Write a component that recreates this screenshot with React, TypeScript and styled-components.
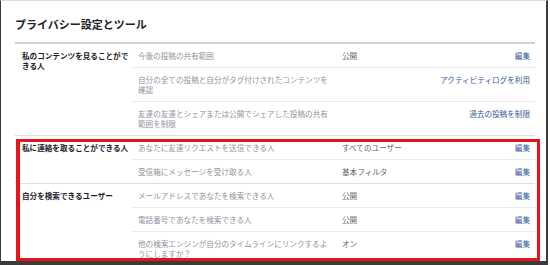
import { FC } from 'react';
import styled, { createGlobalStyle } from 'styled-components';

const GlobalStyle = createGlobalStyle`
	html, body {
		margin: 0;
		padding: 0;
		background: #ffffff;
	}
	body {
		font-family: 'Noto Sans CJK JP', 'Noto Sans', sans-serif;
	}
`;

type Row = { label: string; value?: string; action: string };
type Section = { title: string; rows: Row[] };

const sections: Section[] = [
	{
		title: '私のコンテンツを見ることができる人',
		rows: [
			{ label: '今後の投稿の共有範囲', value: '公開', action: '編集' },
			{ label: '自分の全ての投稿と自分がタグ付けされたコンテンツを確認', action: 'アクティビティログを利用' },
			{ label: '友達の友達とシェアまたは公開でシェアした投稿の共有範囲を制限', action: '過去の投稿を制限' },
		],
	},
	{
		title: '私に連絡を取ることができる人',
		rows: [
			{ label: 'あなたに友達リクエストを送信できる人', value: 'すべてのユーザー', action: '編集' },
			{ label: '受信箱にメッセージを受け取る人', value: '基本フィルタ', action: '編集' },
		],
	},
	{
		title: '自分を検索できるユーザー',
		rows: [
			{ label: 'メールアドレスであなたを検索できる人', value: '公開', action: '編集' },
			{ label: '電話番号であなたを検索できる人', value: '公開', action: '編集' },
			{ label: '他の検索エンジンが自分のタイムラインにリンクするようにしますか？', value: 'オン', action: '編集' },
		],
	},
];

const App: FC = () => {
	return (
		<>
			<GlobalStyle />
			<Frame>
				<Page>
					<Header>プライバシー設定とツール</Header>
					{sections.map((section, i) => (
						<SectionBlock key={section.title} first={i === 0}>
							<Category>{section.title}</Category>
							<RowList>
								{section.rows.map((row, j) => (
									<SettingRow key={row.label} first={j === 0}>
										<Label>{row.label}</Label>
										<Value>{row.value}</Value>
										<Action href="#">{row.action}</Action>
									</SettingRow>
								))}
							</RowList>
						</SectionBlock>
					))}
				</Page>
				<Highlight />
			</Frame>
		</>
	);
};

export default App;

const Frame = styled.div`
	position: relative;
	box-sizing: border-box;
	width: 548px;
	height: 265px;
	overflow: hidden;
	background: #ffffff;
	border-top: 1px solid #dcdde0;
	border-left: 1px solid #3b3b3d;
	border-right: 2px solid #3b3b3d;
	border-bottom: 4px solid #3b3b3d;
`;

const Page = styled.div`
	padding: 0 11px 0 14px;
`;

const Header = styled.h1`
	margin: 0;
	padding: 16px 0 11px;
	font-size: 11px;
	line-height: 14px;
	font-weight: 700;
	color: #1d2129;
	border-bottom: 2px solid #cfd1d5;
`;

const SectionBlock = styled.div<{ first: boolean }>`
	display: grid;
	grid-template-columns: 117px 1fr;
	border-top: ${(p) => (p.first ? 'none' : '1px solid #dddfe2')};
`;

const Category = styled.div`
	padding: 7px 2px 6px 7px;
	font-size: 7.6px;
	line-height: 10px;
	font-weight: 700;
	color: #1d2129;
`;

const RowList = styled.div`
	display: flex;
	flex-direction: column;
`;

const SettingRow = styled.div<{ first: boolean }>`
	display: grid;
	grid-template-columns: 210px 1fr auto;
	align-items: start;
	padding: 7px 5px 6px 0;
	font-size: 7.6px;
	line-height: 10px;
	border-top: ${(p) => (p.first ? 'none' : '1px solid #e9ebee')};
`;

const Label = styled.div`
	padding: 0 10px 0 6px;
	color: #90949c;
`;

const Value = styled.div`
	color: #616770;
`;

const Action = styled.a`
	color: #365899;
	text-decoration: none;
	text-align: right;
	white-space: nowrap;
`;

const Highlight = styled.div`
	position: absolute;
	left: 15px;
	top: 138px;
	width: 524px;
	bottom: 0;
	box-sizing: border-box;
	border: 3px solid #e8141c;
	border-left-width: 4px;
	pointer-events: none;
`;
